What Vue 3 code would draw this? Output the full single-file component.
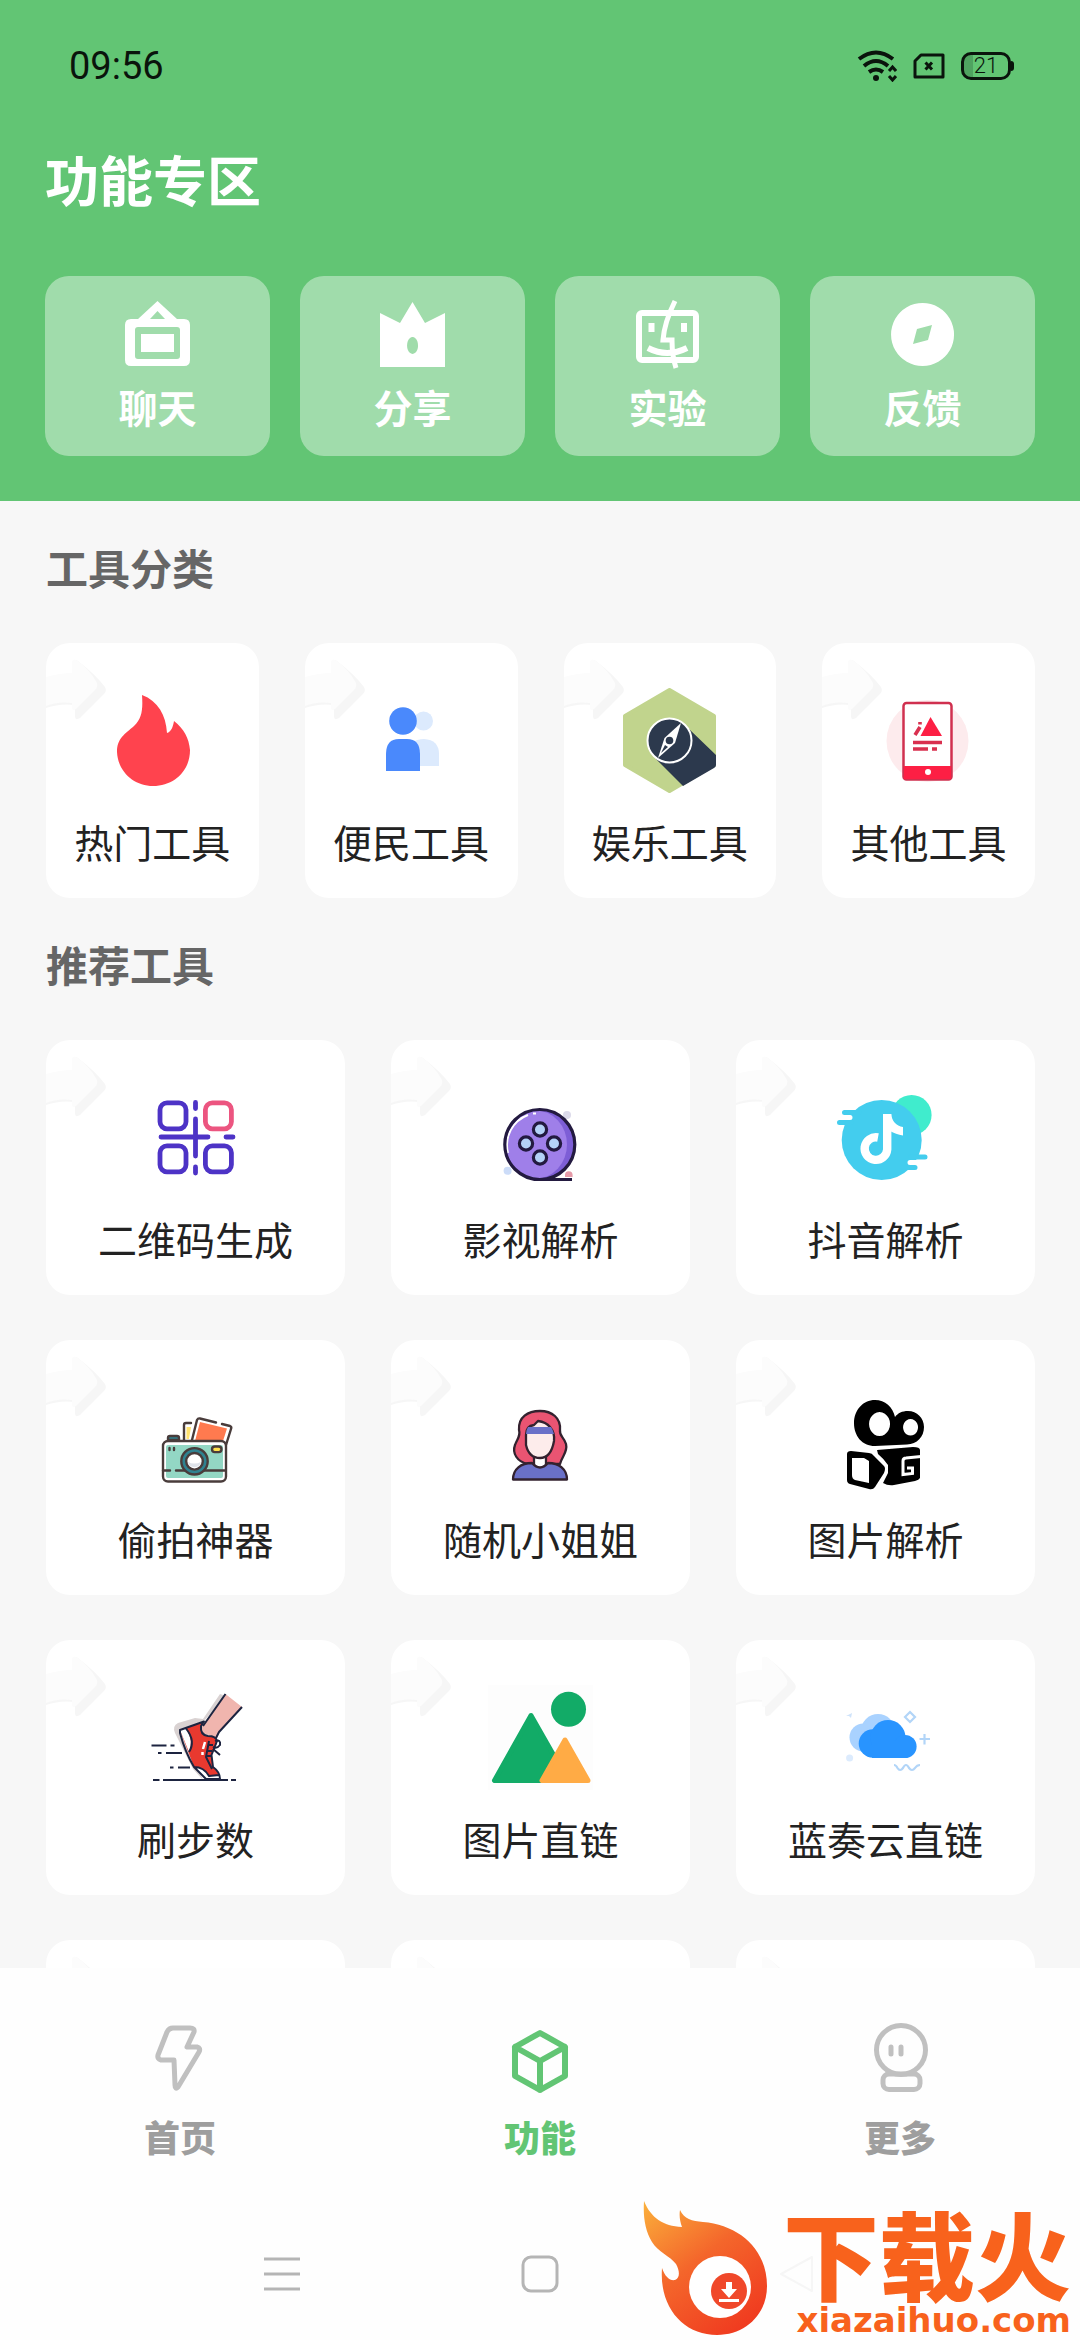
<template>
  <div class="page">
    <header class="header">
      <div class="status-bar">
        <span class="status-time">09:56</span>
        <div class="status-icons">
          <svg class="status-wifi" viewBox="0 0 40 32" fill="none" stroke="#0a140c">
            <path d="M2 9 Q19 -4 36 9" stroke-width="4" />
            <path d="M7 16 Q19 6 31 16" stroke-width="4" />
            <path d="M12 22 Q19 17 26 22" stroke-width="4" />
            <circle cx="19" cy="28" r="3" fill="#0a140c" stroke="none" />
            <path d="M32 21 l3.5 -4 l3.5 4 M32 26 l3.5 4 l3.5 -4" stroke-width="3" />
          </svg>
          <svg class="status-sim" viewBox="0 0 32 26" fill="none" stroke="#0a140c">
            <path d="M8 2 H30 V24 H2 V8 Z" stroke-width="3" stroke-linejoin="round" />
            <path d="M12.5 9.5 l6.5 7 M19 9.5 l-6.5 7" stroke-width="3" />
          </svg>
          <span class="battery">21</span>
        </div>
      </div>

      <h1 class="title">功能专区</h1>

      <div class="shortcuts">
        <button v-for="item in shortcuts" :key="item.name" class="shortcut">
          <svg class="shortcut-icon" viewBox="0 0 75 75" v-html="item.icon"></svg>
          <span class="shortcut-name">{{ item.name }}</span>
        </button>
      </div>
    </header>

    <main class="content">
      <section v-for="group in groups" :key="group.title">
        <h2 class="section-title">{{ group.title }}</h2>
        <div class="tools" :class="group.layout">
          <button v-for="(tool, index) in group.tools" :key="index" class="tool">
            <svg class="tool-arrow" viewBox="0 0 70 90">
              <path d="M0 40 Q14 34 28 34 V20 Q28 16 32 18 Q50 32 59 44 Q61 48 58 51 L34 75 Q29 78 29 73 V62 Q14 60 0 65 Z" fill="#f6f6f6" />
              <path d="M0 34 Q14 30 26 30 V18 Q28 15 32 18 Q44 27 51 40 Q52 44 49 47 L30 66 Q26 69 26 64 V60 Q12 58 0 63 Z" fill="#fcfcfc" />
            </svg>
            <svg class="tool-icon" viewBox="0 0 105 105" v-html="tool.icon"></svg>
            <span class="tool-name">{{ tool.name }}</span>
          </button>
        </div>
      </section>
    </main>

    <nav class="tabbar">
      <button
        v-for="(tab, index) in tabs"
        :key="tab.name"
        class="tab"
        :class="{ 'is-active': currentTab === index }"
        @click="currentTab = index"
      >
        <svg class="tab-icon" viewBox="0 0 72 72" fill="none" stroke="currentColor" stroke-width="6" stroke-linejoin="round" stroke-linecap="round" v-html="tab.icon"></svg>
        <span class="tab-name">{{ tab.name }}</span>
      </button>
    </nav>

    <div class="system-nav">
      <button class="system-key" aria-label="menu">
        <svg viewBox="0 0 40 40" width="40" height="40" fill="none" stroke="#b5b5b5" stroke-width="3">
          <path d="M2 5 H38 M2 20 H38 M2 35 H38" />
        </svg>
      </button>
      <button class="system-key" aria-label="home">
        <svg viewBox="0 0 40 40" width="40" height="40" fill="none" stroke="#b5b5b5" stroke-width="3">
          <rect x="3" y="3" width="34" height="34" rx="8" />
        </svg>
      </button>
      <button class="system-key" aria-label="back">
        <svg viewBox="0 0 40 40" width="40" height="40" fill="none" stroke="#f6f6f6" stroke-width="2">
          <path d="M34 3 V37 L3 20 Z" stroke-linejoin="round" />
        </svg>
      </button>
    </div>

    <div class="brand">
      <svg class="brand-flame" viewBox="0 0 130 140">
        <defs>
          <linearGradient id="flame" x1="0" y1="0" x2="0.7" y2="1">
            <stop offset="0" stop-color="#fbb03b" />
            <stop offset="0.5" stop-color="#f4662b" />
            <stop offset="1" stop-color="#f03c20" />
          </linearGradient>
        </defs>
        <path d="M3 1 C10 18 22 26 41 27 C39 21 38 16 39 10 C43 19 51 21 62 22 C98 25 126 49 126 86 C126 114 105 135 76 135 C43 135 18 108 21 68 C24 77 29 81 34 80 C39 78 39 71 35 64 C29 56 17 52 11 42 C4 30 2 17 3 1 Z" fill="url(#flame)" />
        <circle cx="79" cy="87" r="31" fill="#fff" />
        <circle cx="88" cy="91" r="18" fill="#f0482a" />
        <path d="M85 82 h6 v7 h5 l-8 9 l-8 -9 h5 Z M78 99 h20 v3 h-20 Z" fill="#fff" />
      </svg>
      <div class="brand-text">
        <span class="brand-name">下载火</span>
        <span class="brand-site">xiazaihuo.com</span>
      </div>
    </div>
  </div>
</template>

<script setup>
import { ref } from 'vue'

const currentTab = ref(1)

const shortcuts = [
  {
    name: '聊天',
    icon: `<path fill="#fff" fill-rule="evenodd" d="M37.5 4 L57 22 H64 Q70 22 70 28 V63 Q70 69 64 69 H11 Q5 69 5 63 V28 Q5 22 11 22 H18 Z M37.5 14 L30 22 H45 Z M18 30 Q15 30 15 33 V59 Q15 62 18 62 H57 Q60 62 60 59 V33 Q60 30 57 30 Z"/>
      <rect x="21" y="37" width="33" height="18" fill="#fff"/>`
  },
  {
    name: '分享',
    icon: `<path fill="#fff" fill-rule="evenodd" d="M5 16 L25 26 L37.5 5 L50 26 L70 16 V70 H5 Z M37.5 40 a5.5 8.5 0 1 0 .1 0 Z"/>`
  },
  {
    name: '实验',
    icon: `<g fill="none" stroke="#fff" stroke-width="6">
      <rect x="9" y="16" width="57" height="47" rx="3"/>
      <path d="M45 4 C38 18 34 30 33 43 H42 C42 53 43 62 46 71" stroke-width="5"/>
      <path d="M18 51 Q37 61 57 51"/><path d="M21.5 26 v9 M54 26 v9"/></g>`
  },
  {
    name: '反馈',
    icon: `<path fill="#fff" fill-rule="evenodd" d="M37.5 6 a31.5 31.5 0 1 0 .1 0 Z M47 28 L43 43 L28 47 L32 32 Z"/>`
  }
]

const hotIcon = `<path fill="#ff434e" d="M42 7 C43 22 42 30 34 38 C25 46 17 50 17 64 C18 84 34 98 53 98 C74 98 90 83 90 62 C89 50 84 41 74 33 C73 39 71 44 67 45 C66 27 58 13 42 7 Z"/>`

const peopleIcon = `<g fill="#dceafd"><circle cx="64.5" cy="33" r="9.5"/><path d="M50 78 V62 Q52 51 65 51 Q80 52 80 66 V78 Z"/></g>
  <g fill="#4a89fc"><circle cx="44" cy="33" r="13.8"/><path d="M27 83 V66 Q27 51 40 51 H48 Q61 51 61 66 V83 Z"/></g>`

const compassIcon = `<path d="M52.5 2 L97 28 V77 L52.5 103 L8 77 V28 Z" fill="#c1d48d" stroke="#c1d48d" stroke-width="4" stroke-linejoin="round"/>
  <path d="M72 41 L99 67 V77 Q99 79 97 80 L66 98 L39 71 Z" fill="#2c394d"/>
  <circle cx="52.5" cy="52.5" r="22" fill="#2c394d" stroke="#fff" stroke-width="2"/>
  <path d="M64 35 L58 55 L41 70 L47.5 50 Z" fill="#fff"/><circle cx="52.5" cy="52.5" r="3.8" fill="#2c394d"/>
  <path d="M48 57 L51 59 L44 65 Z" fill="#2c394d"/>`

const phoneIcon = `<circle cx="51.5" cy="53" r="41" fill="#fdebed"/>
  <rect x="27.5" y="15" width="48" height="76.5" rx="3" fill="#fff" stroke="#d0304f" stroke-width="2.5"/>
  <path d="M28 78 H75 V91 H28 Z" fill="#fd1f44"/><circle cx="52" cy="84" r="3" fill="#fff"/>
  <path d="M54.5 29 L66 48 H44.5 Z" fill="#fd1f44"/>
  <path d="M44 39 L39 47 M44 34 v2.5 M37 54.5 H66 M37 61 H52 M56 61 H61" stroke="#d9304f" stroke-width="3.6" fill="none"/>`

const qrIcon = `<g fill="none" stroke="#4d33c6" stroke-width="4.8" stroke-linecap="round">
  <rect x="17" y="17.8" width="26" height="26" rx="7"/>
  <rect x="62.4" y="17.8" width="26" height="26" rx="7" stroke="#ec5580"/>
  <rect x="17" y="60.8" width="26" height="26" rx="7"/>
  <rect x="62.4" y="60.8" width="26" height="26" rx="7"/>
  <path d="M52.5 17.5 V23.5 M52.5 34 V71 M52.5 82 V88 M18 52 H65 M83 52 H90"/></g>`

const reelIcon = `<circle cx="19.6" cy="85.7" r="4" fill="#ccdcf8"/><circle cx="79" cy="30" r="4" fill="#dcdaea"/>
  <circle cx="51.8" cy="59.5" r="35" fill="#7d5ed6"/><ellipse cx="48" cy="59.5" rx="31" ry="34" fill="#9f7fe9"/>
  <path d="M20 68 A32 32 0 0 1 40 30 M45 28.5 h3" fill="none" stroke="#fff" stroke-width="2"/>
  <circle cx="51.8" cy="59.5" r="35" fill="none" stroke="#231a40" stroke-width="3.2"/>
  <path d="M52 94.5 H84" stroke="#231a40" stroke-width="3.2"/>
  <path d="M77 92 V90 a3.8 3.8 0 0 1 7.6 0 V92 Z" fill="#e59aa8"/>
  <g fill="#b4d2f7" stroke="#231a40" stroke-width="3.2">
  <circle cx="38" cy="58.5" r="6.6"/><circle cx="66" cy="58.5" r="6.6"/><circle cx="52" cy="44.5" r="6.6"/><circle cx="52" cy="72.5" r="6.6"/></g>`

const noteIcon = `<circle cx="78.6" cy="30" r="20" fill="#40eccd"/><circle cx="48.7" cy="55" r="40" fill="#43cdee"/>
  <g stroke-width="5" stroke-linecap="round" fill="none">
  <path d="M11.5 27.5 H26 M6.5 37.5 H18 M78 72 H92 M70 82.5 H82" stroke="#43cdee"/>
  <path d="M10 32.5 H17 M77 77.5 H88" stroke="#fff"/></g>
  <path d="M45 52.5 A11.3 11.3 0 1 0 54.2 64.5 V29" fill="none" stroke="#fff" stroke-width="8.4"/>
  <path d="M50 29 H58 C59 36 63 41 70 42 V50.5 C65 50 61 48 57 46 Z" fill="#fff"/>`

const cameraIcon = `<g stroke="#493c3b" stroke-width="2.4" stroke-linejoin="round" stroke-linecap="round">
  <path d="M41 55 V40 Q41 38 43 38 H48" fill="#fff"/><path d="M43.5 54 V42 H48 L46 54 Z" fill="#ffe26f" stroke="none"/>
  <path d="M49 55 L54 35 Q55 33 57 33.5 L73 37.5 M79 39 L87 41 Q89 42 88 44 L83 60" fill="#fff"/>
  <path d="M57 37 L84 43.5 L80 56 H52 Z" fill="#ff7a4f" stroke="none"/>
  <path d="M25 55 V53 Q25 51 27 51 H34 Q36 51 36 53 V55 Z" fill="#2f8290"/>
  <rect x="20" y="56" width="63" height="40.5" rx="5" fill="#fff"/>
  <rect x="23" y="60" width="57" height="33" rx="2" fill="#93d7c4" stroke="none"/>
  <path d="M20 85.5 H27 M33 85.5 H82 M26.5 63 v2 M31 63 v2" fill="none"/>
  <circle cx="51.5" cy="76.3" r="13.2" fill="#2f8290"/><circle cx="51.5" cy="76.3" r="8.3" fill="#fff"/>
  <path d="M45 77 Q51 80 58 77 Q57 82 51.5 82.3 Q46 82 45 77 Z" fill="#dfe3ea" stroke="none"/>
  <rect x="69" y="61.5" width="9.5" height="5.6" rx="2.8" fill="#ffe04d"/></g>`

const girlIcon = `<g stroke="#33222f" stroke-width="2.3" stroke-linejoin="round">
  <path d="M40 79 C29 77 24 68 27 60 C29 54 33 51 31 45 C30 32 40 26 52 26 C64 26 73 33 72 45 C71 51 76 52 78 59 C80 67 74 71 72 79 Z" fill="#ea5472"/>
  <path d="M46 68 V80 Q52 87 58 80 V68 Z" fill="#fff"/>
  <path d="M25 94.5 C25 84 33 78 44 78 Q52 87 60 78 C71 78 79 84 79 94.5 Z" fill="#6a70c8"/>
  <path d="M38 50 Q38 41 46 40 L50 36 Q58 37 62 42 Q67 48 66 56 Q63 73 52 73 Q41 73 38 60 Z" fill="#fdeceb"/>
  <path d="M40 42 H63 Q65 45 66 49 H38 Q38 45 40 42 Z" fill="#6a70c8" stroke="none"/></g>`

const recorderIcon = `<path fill-rule="evenodd" d="M42 15 C52 15 60 22 62 32 C65 28 69 26 75 26 C84 26 91 33 91 42 C91 52 84 59 74 59.5 L42 61 C29 61 21 51 21 38 C21 25 30 15 42 15 Z M46.5 27 a10.5 12 0 1 0 .1 0 Z M77.5 34 a7.5 8.3 0 1 0 .1 0 Z"/>
  <path fill-rule="evenodd" d="M14 69 Q14 66 18 66 L36 68 Q39 68 41 71 L51 81 Q53 83 51 88 L42 102 Q40 105 36 104 L17 99 Q14 98 14 95 Z M19 73 V90 Q19 94 22 95 L36 98 V76 L31 73 Z"/>
  <path d="M44 65 L80 62 Q87 62 87 65 V93 Q86 95 82 96 L61 100 Q55 101 50 98 L55 88 V80 Q51 74 45 69 Z"/>
  <path d="M88 71.5 L73 73 Q70 73 70 76 V89.5 L79.5 88.5 V83 H74" fill="none" stroke="#fff" stroke-width="3"/>`

const shoeIcon = `<path d="M77 9 L83 11 L61 36 L44 60 L60 95 L50 84 L32 48 Q29 41 35 38 L52 33 L60 34 Z" fill="#d9d2d2"/>
  <path d="M82.5 9 L99 22 L76 46 L73 52 L59 48 V41 Z" fill="#f0b5ae"/>
  <path d="M37 45 L61 36.5 L58 42 Q58 50 65 51 L73 52 L74 58 L68.5 70 L70 82 L76 89 V94.5 H63 L51 82 Z" fill="#e8392f"/>
  <path d="M37 45 L43 43.5 Q51 56 46 67 Z M51 82 Q61 82 66 91 L76 90 V94.5 H63 Z" fill="#fff"/>
  <g fill="none" stroke="#1d2440" stroke-width="2" stroke-linejoin="round">
  <path d="M82.5 9 L60 41 M99 22 L76 47 L73 53"/>
  <path d="M37 45 L61 36.5 L58 41 Q57 50 65 51 Q73 51 74 56 L68.5 70 L70 82 Q77 87 77 94 H63 L51 82 Q42 67 37 48 Z M43 43.5 Q53 56 46 67 M51 82 Q61 82 66 91 L76 90 M66 56 L63 72 L69 84"/>
  <path d="M72 56 q6 -2 5 4 q-3 4 -7 2 M70 64 l7 6 M65 60 h5 M64 66 h5 M64 71 h4"/>
  <path d="M10 95 H16.5 M20 95 H85 M88 95 H93 M8.5 60.5 H23.5 M27.5 60.5 H31.5 M15 68 H18.5 M23 68 H39 M27 82.5 H30.5 M35 82.5 H47"/></g>
  <path d="M62 57 L60 64 M59.5 67 v3" stroke="#fff" stroke-width="2.5"/>`

const pictureIcon = `<rect width="105" height="105" fill="#fdfdfd"/>
  <g stroke-width="5" stroke-linejoin="round"><path d="M43 30.5 L6.5 95.5 H80 Z" fill="#12ab67" stroke="#12ab67"/>
  <path d="M77 55 L54 95.5 H100 Z" fill="#ffab45" stroke="#ffab45"/></g>
  <circle cx="80.5" cy="24.3" r="17.5" fill="#12ab67"/>`

const cloudIcon = `<g fill="#a9d2ff"><circle cx="30.5" cy="52.5" r="14"/><circle cx="45" cy="46" r="17"/></g>
  <g fill="#2894ff"><circle cx="40" cy="58.5" r="14.3"/><circle cx="55" cy="52.5" r="17.5"/><circle cx="72" cy="61.5" r="11.6"/><rect x="39" y="56" width="33" height="17"/></g>
  <g fill="none" stroke="#b2d5f8" stroke-width="2.2">
  <path d="M77 27 L82 32 L77 37 L72 32 Z M91.5 49 V59.5 M86.5 54 H97 M61 80 Q63 80 64.5 83 Q67 87 70 83 Q73 77 76 83 Q79 87 82 83 Q84 80 87 80"/></g>
  <circle cx="16.6" cy="73" r="3.5" fill="#dcebfd"/><path d="M13 31 L19 28 L18 33 L16 31 Z" fill="#cfe3fa"/>`

const groups = [
  {
    title: '工具分类',
    layout: 'tools--four',
    tools: [
      { name: '热门工具', icon: hotIcon },
      { name: '便民工具', icon: peopleIcon },
      { name: '娱乐工具', icon: compassIcon },
      { name: '其他工具', icon: phoneIcon }
    ]
  },
  {
    title: '推荐工具',
    layout: 'tools--three',
    tools: [
      { name: '二维码生成', icon: qrIcon },
      { name: '影视解析', icon: reelIcon },
      { name: '抖音解析', icon: noteIcon },
      { name: '偷拍神器', icon: cameraIcon },
      { name: '随机小姐姐', icon: girlIcon },
      { name: '图片解析', icon: recorderIcon },
      { name: '刷步数', icon: shoeIcon },
      { name: '图片直链', icon: pictureIcon },
      { name: '蓝奏云直链', icon: cloudIcon },
      { name: '', icon: '' },
      { name: '', icon: '' },
      { name: '', icon: '' }
    ]
  }
]

const tabs = [
  { name: '首页', icon: `<path d="M29 6 H46 Q51 6 50 10 L43 25 H53 Q57 26 55 30 L34 65 Q31 68 31 63 L30 38 H17 Q13 37 14 33 L23 10 Q25 6 29 6 Z" stroke-width="5"/>` },
  { name: '功能', icon: `<path d="M36 11 L61 25 V54 L36 68 L11 54 V25 Z M11 25 L36 39 L61 25 M36 39 V68"/>` },
  { name: '更多', icon: `<g stroke-width="5"><circle cx="37" cy="28" r="24.5"/><rect x="19" y="52" width="37" height="15.5" rx="6"/><path d="M27 25 v7 M37 25 v7"/></g>` }
]
</script>

<style>
body {
  margin: 0;
  background: #fff;
}
</style>

<style scoped>
.page {
  position: relative;
  display: flex;
  flex-direction: column;
  height: 100vh;
  overflow: hidden;
  background: #f7f7f7;
  font-family: Roboto, "Noto Sans CJK SC", sans-serif;
}

button {
  margin: 0;
  padding: 0;
  border: none;
  background: none;
  font-family: inherit;
  cursor: pointer;
}

.header {
  flex-shrink: 0;
  padding: 0 45px 45px;
  background: #62c574;
}

.status-bar {
  display: flex;
  align-items: center;
  justify-content: space-between;
  height: 132px;
  padding: 0 24px;
  color: #0a140c;
}

.status-time {
  font-size: 38px;
}

.status-icons {
  display: flex;
  align-items: center;
  gap: 16px;
}

.status-wifi {
  width: 40px;
  height: 32px;
}

.status-sim {
  width: 32px;
  height: 26px;
}

.battery {
  position: relative;
  box-sizing: border-box;
  width: 50px;
  height: 28px;
  border: 3px solid #0a140c;
  border-radius: 10px;
  background: linear-gradient(to right, #4fa360 20%, transparent 20%);
  font-size: 22px;
  font-weight: 300;
  line-height: 22px;
  text-align: center;
}

.battery::after {
  content: '';
  position: absolute;
  top: 6px;
  right: -6px;
  width: 3px;
  height: 10px;
  border-radius: 0 3px 3px 0;
  background: #0a140c;
}

.title {
  margin: 0;
  padding: 2px 0 42px;
  color: #fff;
  font-size: 54px;
  font-weight: 700;
  line-height: 100px;
}

.shortcuts {
  display: grid;
  grid-template-columns: repeat(4, 1fr);
  gap: 30px;
}

.shortcut {
  display: flex;
  flex-direction: column;
  align-items: center;
  gap: 12px;
  padding: 21px 0 20px;
  border-radius: 24px;
  background: rgba(255, 255, 255, 0.4);
}

.shortcut-icon {
  width: 75px;
  height: 75px;
}

.shortcut-name {
  color: #fff;
  font-size: 39px;
  font-weight: 700;
  line-height: 52px;
}

.content {
  flex: 1;
  min-height: 0;
  padding: 0 45px 0 46px;
  overflow: hidden;
}

.section-title {
  margin: 0;
  padding: 40px 0 42px;
  color: #666;
  font-size: 42px;
  font-weight: 700;
  line-height: 60px;
}

.tools {
  display: grid;
  gap: 45px 46px;
}

.tools--four {
  grid-template-columns: repeat(4, 1fr);
}

.tools--three {
  grid-template-columns: repeat(3, 1fr);
}

.tool {
  position: relative;
  display: flex;
  flex-direction: column;
  align-items: center;
  gap: 22px;
  padding: 45px 0 23px;
  border-radius: 24px;
  background: #fff;
  overflow: hidden;
}

.tool-arrow {
  position: absolute;
  top: 0;
  left: 0;
  width: 70px;
  height: 90px;
}

.tool-icon {
  position: relative;
  width: 105px;
  height: 105px;
}

.tool-name {
  height: 60px;
  color: #222;
  font-size: 39px;
  line-height: 60px;
  white-space: nowrap;
}

.tabbar {
  display: grid;
  flex-shrink: 0;
  grid-template-columns: repeat(3, 1fr);
  padding: 54px 0 44px;
  background: #fefefe;
}

.tab {
  display: flex;
  flex-direction: column;
  align-items: center;
  gap: 22px;
  color: #c0c0c0;
}

.tab-icon {
  width: 72px;
  height: 72px;
}

.tab-name {
  color: #9e9e9e;
  font-size: 36px;
  font-weight: 900;
  line-height: 48px;
}

.tab.is-active,
.tab.is-active .tab-name {
  color: #62c574;
}

.system-nav {
  display: flex;
  flex-shrink: 0;
  align-items: center;
  justify-content: center;
  height: 132px;
  background: #fefefe;
}

.system-key {
  display: flex;
  justify-content: center;
  width: 258px;
}

.brand {
  position: absolute;
  right: 9px;
  bottom: 0;
  display: flex;
  gap: 12px;
  color: #f8621c;
}

.brand-flame {
  width: 130px;
  height: 140px;
}

.brand-text {
  display: flex;
  flex-direction: column;
  align-items: flex-end;
  padding-top: 16px;
}

.brand-name {
  font-size: 96px;
  font-weight: 900;
  line-height: 88px;
}

.brand-site {
  font-family: "DejaVu Sans", sans-serif;
  font-size: 34px;
  font-weight: 700;
  line-height: 32px;
}
</style>
